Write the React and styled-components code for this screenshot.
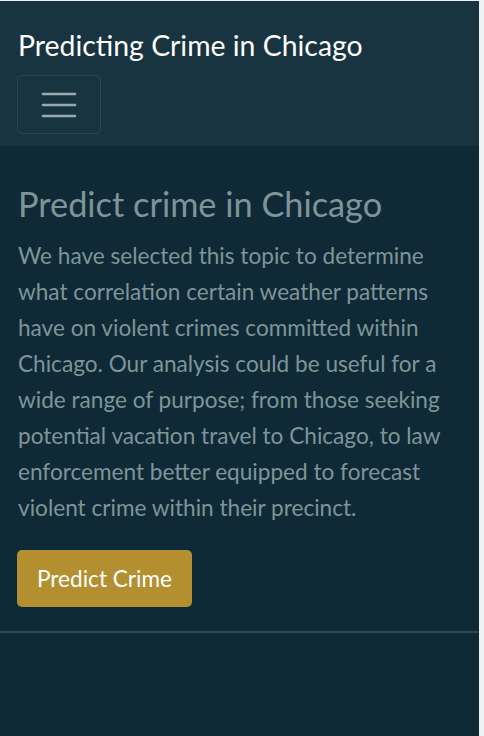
import React from "react";
import styled, { createGlobalStyle } from "styled-components";

const GlobalStyle = createGlobalStyle`
  html, body {
    margin: 0;
    padding: 0;
    background: #eef0f2;
  }
  body {
    padding-top: 1px;
    font-family: "Lato", "Noto Sans", sans-serif;
  }
`;

const Page = styled.div`
  width: calc(100% - 5px);
  min-height: 735px;
  background: #0f2a36;
  display: flex;
  flex-direction: column;
`;

const Navbar = styled.nav`
  background: #193441;
  padding: 26px 17px 12px;
  display: flex;
  flex-direction: column;
  align-items: flex-start;
  gap: 12px;
`;

const Brand = styled.a`
  color: #ffffff;
  font-size: 28.4px;
  line-height: 36px;
  text-decoration: none;
  padding-left: 1px;
`;

const Toggler = styled.button`
  width: 84px;
  height: 59px;
  background: transparent;
  border: 1px solid #2b4553;
  border-radius: 5px;
  display: flex;
  align-items: center;
  justify-content: center;
  padding: 0;
`;

const Main = styled.main`
  padding: 36px 17px 24px;
  display: flex;
  flex-direction: column;
  align-items: flex-start;
`;

const Heading = styled.h1`
  margin: 0 0 12px 1px;
  color: #7f9499;
  font-size: 34.3px;
  font-weight: 400;
  line-height: 44px;
`;

const Lead = styled.p`
  margin: 0 0 24px 1px;
  color: #7f9499;
  font-size: 22.6px;
  line-height: 36px;
`;

const PrimaryButton = styled.button`
  background: #b38f30;
  color: #ffffff;
  border: none;
  border-radius: 5px;
  width: 175px;
  height: 57px;
  font-family: inherit;
  font-size: 22.6px;
`;

const Divider = styled.hr`
  margin: 0;
  border: none;
  border-top: 2px solid #2d4956;
`;

export default function App() {
  return (
    <>
      <GlobalStyle />
      <Page>
        <Navbar>
          <Brand href="#">Predicting Crime in Chicago</Brand>
          <Toggler aria-label="Toggle navigation">
            <svg width="36" height="28" viewBox="0 0 36 28">
              <g stroke="#9aa9b0" strokeWidth="2.6" strokeLinecap="round">
                <line x1="2" y1="3" x2="34" y2="3" />
                <line x1="2" y1="14" x2="34" y2="14" />
                <line x1="2" y1="25" x2="34" y2="25" />
              </g>
            </svg>
          </Toggler>
        </Navbar>
        <Main>
          <Heading>Predict crime in Chicago</Heading>
          <Lead>
            We have selected this topic to determine what correlation certain
            weather patterns have on violent crimes committed within Chicago.
            Our analysis could be useful for a wide range of purpose; from
            those seeking potential vacation travel to Chicago, to law
            enforcement better equipped to forecast violent crime within their
            precinct.
          </Lead>
          <PrimaryButton>Predict Crime</PrimaryButton>
        </Main>
        <Divider />
      </Page>
    </>
  );
}
